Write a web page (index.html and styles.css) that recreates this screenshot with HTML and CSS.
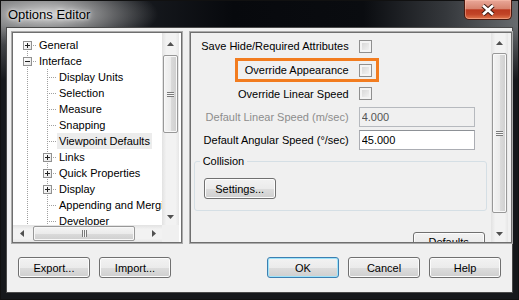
FILE: index.html
```html
<!DOCTYPE html>
<html lang="en">
<head>
    <meta charset="UTF-8">
    <title>Options Editor</title>
    <link rel="stylesheet" href="styles.css">
</head>
<body>
<div class="window">
    <div class="titlebar">
        <span class="title">Options Editor</span>
        <div class="close">
            <svg width="14" height="12" viewBox="0 0 14 12">
                <path d="M2 1.5 L12 10.5 M12 1.5 L2 10.5" stroke="#3b1a12" stroke-width="4.6"/>
                <path d="M2 1.5 L12 10.5 M12 1.5 L2 10.5" stroke="#fff" stroke-width="2.6"/>
            </svg>
        </div>
    </div>
    <div class="client">
        <div class="panes">
            <div class="pane tree-pane">
                <div class="tree-view">
                    <div class="node"><span class="joint first"><i class="box plus"></i></span><span class="label">General</span></div>
                    <div class="node"><span class="joint"><i class="box"></i></span><span class="label">Interface</span></div>
                    <div class="node"><span class="pipe"></span><span class="joint"></span><span class="label">Display Units</span></div>
                    <div class="node"><span class="pipe"></span><span class="joint"></span><span class="label">Selection</span></div>
                    <div class="node"><span class="pipe"></span><span class="joint"></span><span class="label">Measure</span></div>
                    <div class="node"><span class="pipe"></span><span class="joint"></span><span class="label">Snapping</span></div>
                    <div class="node"><span class="pipe"></span><span class="joint"></span><span class="label selected">Viewpoint Defaults</span></div>
                    <div class="node"><span class="pipe"></span><span class="joint"><i class="box plus"></i></span><span class="label">Links</span></div>
                    <div class="node"><span class="pipe"></span><span class="joint"><i class="box plus"></i></span><span class="label">Quick Properties</span></div>
                    <div class="node"><span class="pipe"></span><span class="joint"><i class="box plus"></i></span><span class="label">Display</span></div>
                    <div class="node"><span class="pipe"></span><span class="joint"></span><span class="label">Appending and Merging</span></div>
                    <div class="node"><span class="pipe"></span><span class="joint"></span><span class="label">Developer</span></div>
                </div>
                <div class="vscroll">
                    <div class="sb-btn up"><svg width="7" height="4"><polygon points="0,4 3.5,0 7,4" fill="#505050"/></svg></div>
                    <div class="sb-track"><div class="thumb"><i class="grip"></i></div></div>
                    <div class="sb-btn down"><svg width="7" height="4"><polygon points="0,0 3.5,4 7,0" fill="#505050"/></svg></div>
                </div>
                <div class="hscroll">
                    <div class="sb-btn left"><svg width="4" height="7"><polygon points="4,0 0,3.5 4,7" fill="#505050"/></svg></div>
                    <div class="sb-track"><div class="thumb"><i class="grip"></i></div></div>
                    <div class="sb-btn right"><svg width="4" height="7"><polygon points="0,0 4,3.5 0,7" fill="#505050"/></svg></div>
                </div>
                <div class="corner"></div>
            </div>

            <div class="pane props-pane">
                <div class="props">
                    <div class="row h24"><span class="lbl">Save Hide/Required Attributes</span><span class="check"></span></div>
                    <div class="row mark"><span class="lbl">Override Appearance</span><span class="check"></span></div>
                    <div class="row h23"><span class="lbl">Override Linear Speed</span><span class="check"></span></div>
                    <div class="row h24"><span class="lbl disabled">Default Linear Speed (m/sec)</span><input class="field" value="4.000" disabled></div>
                    <div class="row h22"><span class="lbl">Default Angular Speed (°/sec)</span><input class="field" value="45.000"></div>
                    <fieldset class="group">
                        <legend>Collision</legend>
                        <button class="btn settings">Settings...</button>
                    </fieldset>
                    <button class="btn defaults">Defaults</button>
                </div>
                <div class="vscroll">
                    <div class="sb-btn up"><svg width="7" height="4"><polygon points="0,4 3.5,0 7,4" fill="#505050"/></svg></div>
                    <div class="sb-track"><div class="thumb"><i class="grip"></i></div></div>
                    <div class="sb-btn down"><svg width="7" height="4"><polygon points="0,0 3.5,4 7,0" fill="#505050"/></svg></div>
                </div>
            </div>
        </div>

        <div class="buttons">
            <button class="btn">Export...</button>
            <button class="btn">Import...</button>
            <span class="spacer"></span>
            <button class="btn default">OK</button>
            <button class="btn">Cancel</button>
            <button class="btn">Help</button>
        </div>
    </div>
</div>
</body>
</html>
```

FILE: styles.css
```css
body { margin: 0; font-family: "Liberation Sans", Arial, sans-serif; font-size: 11px; color: #000; }

.window {
    width: 519px; height: 300px; display: flex; flex-direction: column; overflow: hidden;
    background:
        linear-gradient(to bottom, rgba(22,24,27,0) 26px, rgba(22,24,27,1) 80px),
        radial-gradient(ellipse 110px 34px at 48px 14px, rgba(215,215,215,.95), rgba(160,160,160,.6) 55%, rgba(120,120,120,0) 100%),
        linear-gradient(to right, #5d5f63 0%, #1b1e23 22%, #07090d 45%, #0a0c10 70%, #35383c 86%, #696c6f 100%);
    box-shadow: inset 0 0 0 1px #111;
}

.titlebar { height: 28px; flex-shrink: 0; display: flex; justify-content: space-between; align-items: flex-start; }
.title { font-size: 13px; line-height: 15px; padding: 7px 0 0 8px; color: #000; text-shadow: 0 0 6px #fff, 0 0 3px #eee; }
.close {
    width: 48px; height: 20px; box-sizing: border-box; margin-right: 7px;
    display: flex; align-items: center; justify-content: center;
    border: 1px solid #4a1a10; border-top: none; border-radius: 0 0 5px 5px;
    background: linear-gradient(#e9a899 0%, #d7846f 45%, #bb3a20 52%, #c14427 75%, #e0764c 100%);
    box-shadow: inset 0 0 0 1px rgba(255,200,180,.45);
}

.client {
    flex: 1; margin: 0 7px 8px; background: #f0f0f0; display: flex; flex-direction: column;
    padding: 3px 0 0 4px; box-shadow: 0 0 0 1px #4a4a4a;
}
.panes { display: flex; gap: 8px; height: 211px; margin: 1px 0 0 1px; }

.pane { border: 1px solid #6f6f6f; box-shadow: 0 0 0 1px #ababab; display: grid; overflow: hidden; }
.tree-pane { width: 168px; grid-template-columns: 149px 17px; grid-template-rows: 192px 17px; background: #fff; }
.props-pane { width: 323px; grid-template-columns: 300px 17px; grid-template-rows: 209px; background: #f0f0f0; padding-right: 3px; box-sizing: border-box; }

/* tree */
.tree-view { padding: 4px 0 0 4px; overflow: hidden; }
.node { display: flex; height: 16px; white-space: nowrap; }
.joint, .pipe { width: 20px; height: 16px; flex-shrink: 0; }
.pipe { background: repeating-linear-gradient(to bottom, #a0a0a0 0 1px, transparent 1px 2px) no-repeat 10px 0 / 1px 100%; }
.joint {
    background:
        repeating-linear-gradient(to bottom, #a0a0a0 0 1px, transparent 1px 2px) no-repeat 10px 0 / 1px 100%,
        repeating-linear-gradient(to right, #a0a0a0 0 1px, transparent 1px 2px) no-repeat 10px 8px / 10px 1px;
}
.joint.first {
    background:
        repeating-linear-gradient(to bottom, #a0a0a0 0 1px, transparent 1px 2px) no-repeat 10px 8px / 1px 8px,
        repeating-linear-gradient(to right, #a0a0a0 0 1px, transparent 1px 2px) no-repeat 10px 8px / 10px 1px;
}
.box {
    display: block; width: 9px; height: 9px; box-sizing: border-box; margin: 4px 0 0 6px;
    border: 1px solid #919191;
    background: linear-gradient(#222, #222) center / 5px 1px no-repeat, linear-gradient(135deg, #fff, #e6e6e6);
}
.box.plus {
    background: linear-gradient(#222, #222) center / 5px 1px no-repeat, linear-gradient(#222, #222) center / 1px 5px no-repeat, linear-gradient(135deg, #fff, #e6e6e6);
}
.label { padding: 0 2px; line-height: 16px; }
.label.selected { background: #ececec; }

/* scrollbars */
.vscroll { display: flex; flex-direction: column; background: linear-gradient(to right, #e2e2e2, #f2f2f2 25%, #f2f2f2 80%, #e6e6e6); }
.hscroll { display: flex; background: linear-gradient(to bottom, #e2e2e2, #f2f2f2 25%, #f2f2f2 80%, #e6e6e6); }
.corner { background: #f0f0f0; }
.sb-btn { display: flex; align-items: center; justify-content: center; flex-shrink: 0; }
.vscroll .sb-btn { height: 17px; }
.vscroll .sb-btn.up { height: 21px; }
.hscroll .sb-btn { width: 17px; }
.sb-track { flex: 1; display: flex; flex-direction: column; }
.hscroll .sb-track { flex-direction: row; }
.thumb {
    box-sizing: border-box; border: 1px solid #989898; border-radius: 2px;
    display: flex; align-items: center; justify-content: center;
    box-shadow: inset 0 0 0 1px #f8f8f8;
}
.vscroll .thumb { margin: 1px 1px 0; background: linear-gradient(to right, #f4f4f4 0, #ebebeb 50%, #dbdbdb 51%, #cfcfcf 100%); }
.hscroll .thumb { margin: 1px 0 0 3px; height: 15px; width: 102px; background: linear-gradient(#f4f4f4 0, #ebebeb 50%, #dbdbdb 51%, #cfcfcf 100%); }
.grip { display: block; width: 7px; height: 5px; background: repeating-linear-gradient(to bottom, #7a7a7a 0 1px, #f6f6f6 1px 2px); }
.hscroll .grip { width: 5px; height: 7px; background: repeating-linear-gradient(to right, #7a7a7a 0 1px, #f6f6f6 1px 2px); }
.tree-pane .vscroll .thumb { height: 78px; }
.props-pane .vscroll .sb-btn.up { height: 19px; }
.props-pane .vscroll .thumb { height: 160px; margin-top: 1px; }

/* property rows */
.props { display: flex; flex-direction: column; padding: 1px 0 0 3px; overflow: hidden; min-height: 0; }
.row { display: flex; align-items: center; gap: 10px; margin-left: 5px; flex-shrink: 0; }
.h24 { height: 24px; }
.h23 { height: 23px; }
.h22 { height: 22px; }
.lbl { width: 150px; text-align: right; flex-shrink: 0; white-space: nowrap; }
.lbl.disabled { color: #8d8d8d; }
.mark { align-self: flex-start; height: 18px; margin-left: 41px; padding-right: 4px; border: 3px solid #f27c1f; }
.mark .lbl { width: 111px; }
.check {
    width: 13px; height: 13px; box-sizing: border-box; border: 1px solid #8f8f8f;
    background: linear-gradient(135deg, #d2d2d2, #f8f8f8); box-shadow: inset 0 0 0 2px #f4f4f4;
}
.field {
    width: 116px; height: 20px; box-sizing: border-box; margin: 0; padding: 0 2px;
    border: 1px solid #abadb3; border-top-color: #8d9196; background: #fff;
    font: inherit; color: #000;
}
.field:disabled { background: #f0f0f0; color: #555; border-color: #b6b9be; }

.group {
    width: 293px; box-sizing: border-box; margin: 3px 0 0; padding: 10px 0 11px 5px; min-width: 0;
    border: 1px solid #d5dfe5; border-radius: 3px; flex-shrink: 0;
}
.group legend { padding: 0 3px; line-height: 14px; }

/* buttons */
.btn {
    width: 72px; height: 21px; box-sizing: border-box; padding: 0;
    border: 1px solid #707070; border-radius: 3px;
    background: linear-gradient(#f2f2f2 0, #ebebeb 50%, #dddddd 51%, #cfcfcf 100%);
    box-shadow: inset 0 0 0 1px #fcfcfc;
    font: inherit; color: #000; flex-shrink: 0;
}
.btn.default { border-color: #3c7fb1; box-shadow: inset 0 0 0 1px #9ee3fa; }
.settings { margin-left: 4px; }
.defaults { align-self: flex-end; margin: 21px 6px 0 0; height: 20px; }
.buttons { display: flex; gap: 9px; margin-top: 14px; padding: 0 11px 0 7px; }
.spacer { flex: 1; }
```
